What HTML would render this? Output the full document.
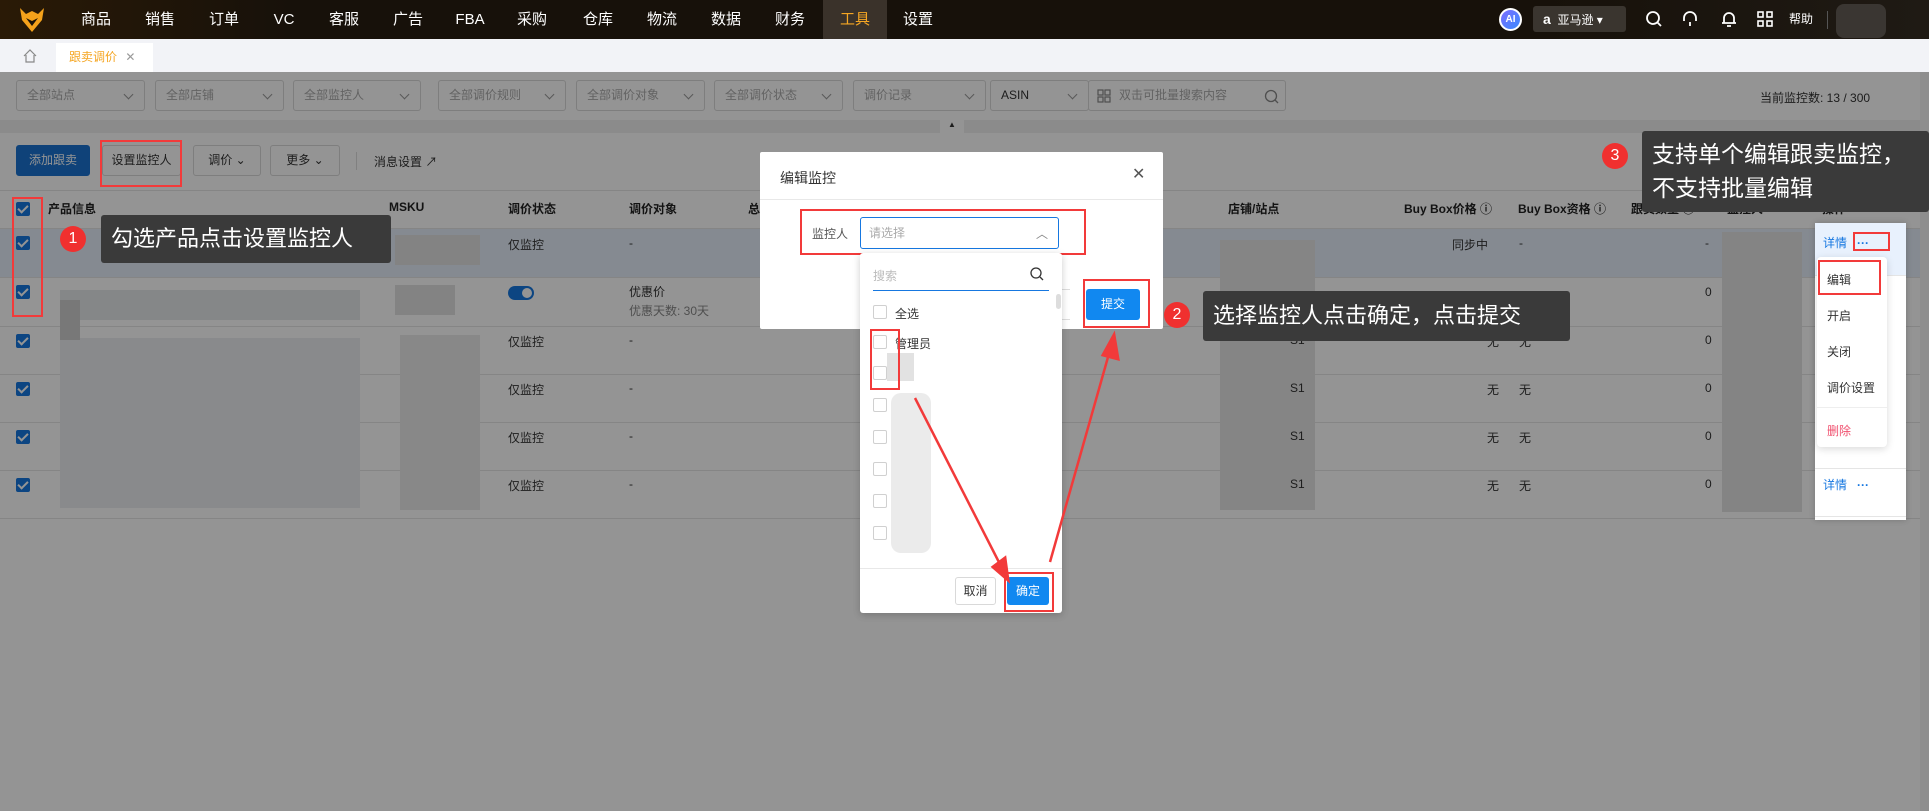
<!DOCTYPE html>
<html><head><meta charset="utf-8">
<style>
*{box-sizing:border-box;margin:0;padding:0}
body{width:1929px;height:811px;overflow:hidden;position:relative;background:#fff;font-family:"Liberation Sans","Noto Sans CJK SC",sans-serif;font-size:13px;color:#333}
.a{position:absolute}
.nav{left:0;top:0;width:1929px;height:39px;background:linear-gradient(90deg,#2a1a06 0%,#17110a 15%,#17110a 80%,#1f1a14 100%)}
.nav .m{position:absolute;top:0;height:39px;line-height:39px;color:#fff;font-size:15px;text-align:center;width:64px}
.sel{background:#fff;border:1px solid #d9d9d9;border-radius:3px;height:31px;line-height:29px;padding-left:10px;color:#aaa;font-size:12px}
.sel.c:after{content:"";position:absolute;right:12px;top:10px;width:6px;height:6px;border-right:1px solid #999;border-bottom:1px solid #999;transform:rotate(45deg)}
.btn{border:1px solid #d9d9d9;background:#fff;border-radius:3px;height:31px;line-height:29px;text-align:center;font-size:12px;color:#333}
.cb{width:14px;height:14px;background:#1677e0;border-radius:2px}
.cb:after{content:"";position:absolute;left:4px;top:1px;width:4px;height:8px;border-right:2px solid #fff;border-bottom:2px solid #fff;transform:rotate(45deg)}
.th{top:200px;font-weight:bold;font-size:12px;color:#222}
.td{font-size:12px;color:#333}
.rl{left:0;width:1920px;height:1px;background:#e5e5e5}
.red{border:2px solid #f23a3a}
.tip{background:#3a3a3a;color:#fff;border-radius:3px}
.num{width:26px;height:26px;border-radius:50%;background:#f0302f;color:#fff;text-align:center;line-height:26px;font-size:16px}
.ucb{width:14px;height:14px;border:1px solid #d0d0d0;border-radius:2px;background:#fff}
</style></head><body>

<div class="a nav">
 <svg class="a" style="left:18px;top:6px" width="28" height="28" viewBox="0 0 28 28"><path d="M2 2 L8 8 L14 5 L20 8 L26 2 L24 14 L14 26 L4 14 Z" fill="#f5a21b"/><path d="M8 12 L14 20 L20 12 L14 15 Z" fill="#1a1208"/></svg>
 <div class="m" style="left:64px">商品</div><div class="m" style="left:128px">销售</div><div class="m" style="left:192px">订单</div><div class="m" style="left:252px">VC</div><div class="m" style="left:312px">客服</div><div class="m" style="left:376px">广告</div><div class="m" style="left:438px">FBA</div><div class="m" style="left:500px">采购</div><div class="m" style="left:566px">仓库</div><div class="m" style="left:630px">物流</div><div class="m" style="left:694px">数据</div><div class="m" style="left:758px">财务</div>
 <div class="m" style="left:823px;background:#3a322a;color:#f5a623">工具</div><div class="m" style="left:886px">设置</div>
 <div class="a" style="left:1499px;top:8px;width:23px;height:23px;border-radius:50%;background:linear-gradient(135deg,#7b6cff,#3b8bff);border:2px solid #fff;color:#fff;font-size:10px;font-weight:bold;text-align:center;line-height:19px">AI</div>
 <div class="a" style="left:1533px;top:6px;width:93px;height:26px;background:#3a352f;border-radius:3px;color:#fff;font-size:12px;line-height:26px;padding-left:10px"><b style="font-size:14px">a</b>&nbsp; 亚马逊 ▾</div>
 <svg class="a" style="left:1645px;top:10px" width="18" height="18" viewBox="0 0 18 18" fill="none" stroke="#fff" stroke-width="1.8"><circle cx="8" cy="8" r="6"/><path d="M12.5 12.5 L16 16"/></svg>
 <svg class="a" style="left:1681px;top:10px" width="18" height="18" viewBox="0 0 18 18" fill="none" stroke="#fff" stroke-width="1.8"><path d="M3 11 V8 a6 6 0 0 1 12 0 V11 M9 16 V12"/></svg>
 <svg class="a" style="left:1720px;top:10px" width="18" height="18" viewBox="0 0 18 18" fill="none" stroke="#fff" stroke-width="1.8"><path d="M4 13 V8 a5 5 0 0 1 10 0 V13 Z M2 13 H16 M7 16 H11"/></svg>
 <svg class="a" style="left:1756px;top:10px" width="18" height="18" viewBox="0 0 18 18" fill="none" stroke="#fff" stroke-width="1.6"><rect x="2" y="2" width="5" height="5"/><rect x="11" y="2" width="5" height="5"/><rect x="2" y="11" width="5" height="5"/><rect x="11" y="11" width="5" height="5"/></svg>
 <div class="a" style="left:1789px;top:0;line-height:39px;color:#fff;font-size:12px">帮助</div>
 <div class="a" style="left:1827px;top:11px;width:1px;height:18px;background:#555"></div>
 <div class="a" style="left:1836px;top:4px;width:50px;height:34px;background:#3a3632;border-radius:8px"></div>
</div>

<div class="a" style="left:0;top:39px;width:1929px;height:33px;background:#f2f3f7"></div>
<svg class="a" style="left:23px;top:49px" width="14" height="14" viewBox="0 0 14 14" fill="none" stroke="#888" stroke-width="1.2"><path d="M1 7 L7 1 L13 7 M3 6 V13 H11 V6"/></svg>
<div class="a" style="left:56px;top:43px;width:97px;height:29px;background:#fff;color:#f5a623;font-size:12px;line-height:29px;padding-left:13px">跟卖调价 <span style="color:#999;margin-left:5px">✕</span></div>

<div class="a" style="left:0;top:72px;width:1920px;height:739px;background:#fff"></div>
<div class="a" style="left:1920px;top:72px;width:9px;height:739px;background:#f5f5f5"></div>
<div class="a sel c" style="left:16px;top:80px;width:129px">全部站点</div>
<div class="a sel c" style="left:155px;top:80px;width:129px">全部店铺</div>
<div class="a sel c" style="left:293px;top:80px;width:128px">全部监控人</div>
<div class="a sel c" style="left:438px;top:80px;width:128px">全部调价规则</div>
<div class="a sel c" style="left:576px;top:80px;width:129px">全部调价对象</div>
<div class="a sel c" style="left:714px;top:80px;width:129px">全部调价状态</div>
<div class="a sel c" style="left:853px;top:80px;width:133px">调价记录</div>
<div class="a sel c" style="left:990px;top:80px;width:99px;color:#333">ASIN</div>
<div class="a sel" style="left:1088px;top:80px;width:198px;padding-left:30px">双击可批量搜索内容</div>
<svg class="a" style="left:1097px;top:89px" width="14" height="14" viewBox="0 0 14 14" fill="none" stroke="#888" stroke-width="1.2"><rect x="1" y="1" width="5" height="5"/><rect x="8" y="1" width="5" height="5"/><rect x="1" y="8" width="5" height="5"/><rect x="8" y="8" width="5" height="5"/></svg>
<svg class="a" style="left:1264px;top:89px" width="15" height="15" viewBox="0 0 15 15" fill="none" stroke="#888" stroke-width="1.3"><circle cx="7" cy="7" r="5.5"/><path d="M11 11 L14 14"/></svg>
<div class="a" style="left:1760px;top:89px;font-size:12px;color:#333">当前监控数: 13 / 300</div>
<div class="a" style="left:0;top:120px;width:1920px;height:13px;background:#f0f0f0"></div>
<div class="a" style="left:940px;top:120px;width:24px;height:13px;background:#fff;color:#333;font-size:8px;text-align:center">▲</div>

<div class="a btn" style="left:16px;top:145px;width:74px;background:#1a73d1;color:#fff;border-color:#1a73d1">添加跟卖</div>
<div class="a btn" style="left:102px;top:145px;width:79px">设置监控人</div>
<div class="a btn" style="left:193px;top:145px;width:68px">调价 ⌄</div>
<div class="a btn" style="left:270px;top:145px;width:70px">更多 ⌄</div>
<div class="a" style="left:356px;top:152px;width:1px;height:18px;background:#ddd"></div>
<div class="a" style="left:374px;top:153px;font-size:12px">消息设置 ↗</div>

<div class="a rl" style="top:190px"></div>
<div class="a" style="left:0;top:228px;width:1920px;height:49px;background:#e6eefa"></div>
<div class="a rl" style="top:228px"></div><div class="a rl" style="top:277px"></div><div class="a rl" style="top:326px"></div><div class="a rl" style="top:374px"></div><div class="a rl" style="top:422px"></div><div class="a rl" style="top:470px"></div><div class="a rl" style="top:518px"></div>
<div class="a cb" style="left:16px;top:202px"></div>
<div class="a th" style="left:48px">产品信息</div><div class="a th" style="left:389px">MSKU</div><div class="a th" style="left:508px">调价状态</div><div class="a th" style="left:629px">调价对象</div><div class="a th" style="left:748px">总</div>
<div class="a th" style="left:1228px">店铺/站点</div><div class="a th" style="left:1404px">Buy Box价格 ⓘ</div><div class="a th" style="left:1518px">Buy Box资格 ⓘ</div><div class="a th" style="left:1631px">跟卖数量 ⓘ</div><div class="a th" style="left:1727px">监控人</div><div class="a th" style="left:1822px">操作</div>

<div class="a cb" style="left:16px;top:236px"></div><div class="a cb" style="left:16px;top:285px"></div><div class="a cb" style="left:16px;top:334px"></div><div class="a cb" style="left:16px;top:382px"></div><div class="a cb" style="left:16px;top:430px"></div><div class="a cb" style="left:16px;top:478px"></div>
<div class="a" style="left:60px;top:290px;width:300px;height:30px;background:#e6e8eb"></div>
<div class="a" style="left:60px;top:338px;width:300px;height:170px;background:#eceef1"></div>
<div class="a" style="left:60px;top:300px;width:20px;height:40px;background:#cfcfcf"></div>
<div class="a" style="left:395px;top:235px;width:85px;height:30px;background:#e2e2e2"></div>
<div class="a" style="left:395px;top:285px;width:60px;height:30px;background:#e2e2e2"></div>
<div class="a" style="left:400px;top:335px;width:80px;height:175px;background:#ebebeb"></div>
<div class="a td" style="left:508px;top:236px">仅监控</div>
<div class="a" style="left:508px;top:286px;width:26px;height:14px;border-radius:7px;background:#1677e0"><div class="a" style="right:2px;top:2px;width:10px;height:10px;border-radius:50%;background:#fff"></div></div>
<div class="a td" style="left:508px;top:333px">仅监控</div><div class="a td" style="left:508px;top:381px">仅监控</div><div class="a td" style="left:508px;top:429px">仅监控</div><div class="a td" style="left:508px;top:477px">仅监控</div>
<div class="a td" style="left:629px;top:236px">-</div>
<div class="a td" style="left:629px;top:283px">优惠价</div><div class="a td" style="left:629px;top:302px;color:#888">优惠天数: 30天</div>
<div class="a td" style="left:629px;top:333px">-</div><div class="a td" style="left:629px;top:381px">-</div><div class="a td" style="left:629px;top:429px">-</div><div class="a td" style="left:629px;top:477px">-</div>
<div class="a" style="left:1220px;top:240px;width:95px;height:270px;background:#e6e6e6"></div>
<div class="a td" style="left:1290px;top:333px">S1</div><div class="a td" style="left:1290px;top:381px">S1</div><div class="a td" style="left:1290px;top:429px">S1</div><div class="a td" style="left:1290px;top:477px">S1</div>
<div class="a td" style="left:1452px;top:236px">同步中</div><div class="a td" style="left:1519px;top:236px">-</div>
<div class="a td" style="left:1487px;top:333px">无</div><div class="a td" style="left:1519px;top:333px">无</div>
<div class="a td" style="left:1487px;top:381px">无</div><div class="a td" style="left:1519px;top:381px">无</div>
<div class="a td" style="left:1487px;top:429px">无</div><div class="a td" style="left:1519px;top:429px">无</div>
<div class="a td" style="left:1487px;top:477px">无</div><div class="a td" style="left:1519px;top:477px">无</div>
<div class="a" style="left:1722px;top:232px;width:80px;height:280px;background:#e4e4e4"></div>
<div class="a td" style="left:1705px;top:236px">-</div><div class="a td" style="left:1705px;top:285px">0</div><div class="a td" style="left:1705px;top:333px">0</div><div class="a td" style="left:1705px;top:381px">0</div><div class="a td" style="left:1705px;top:429px">0</div><div class="a td" style="left:1705px;top:477px">0</div>

<div class="a" style="left:0;top:72px;width:1929px;height:739px;background:rgba(0,0,0,0.42)"></div>

<div class="a" style="left:1815px;top:223px;width:91px;height:297px;background:#fff;box-shadow:0 0 6px rgba(0,0,0,.2)">
 <div class="a" style="left:0;top:0;width:91px;height:52px;background:#e8f1fd"></div>
 <div class="a" style="left:0;top:52px;width:91px;height:1px;background:#e5e5e5"></div>
 <div class="a" style="left:0;top:245px;width:91px;height:1px;background:#e5e5e5"></div>
 <div class="a" style="left:0;top:293px;width:91px;height:1px;background:#e5e5e5"></div>
 <div class="a" style="left:8px;top:11px;color:#1677e0;font-size:12px">详情 &nbsp; <b>···</b></div>
 <div class="a" style="left:8px;top:253px;color:#1677e0;font-size:12px">详情 &nbsp; <b>···</b></div>
</div>
<div class="a" style="left:1817px;top:257px;width:70px;height:190px;background:#fff;border-radius:4px;box-shadow:0 2px 8px rgba(0,0,0,.15);font-size:12px;color:#333">
 <div class="a" style="left:10px;top:14px">编辑</div><div class="a" style="left:10px;top:50px">开启</div><div class="a" style="left:10px;top:86px">关闭</div><div class="a" style="left:10px;top:122px">调价设置</div>
 <div class="a" style="left:0;top:150px;width:70px;height:1px;background:#eee"></div>
 <div class="a" style="left:10px;top:165px;color:#f0506e">删除</div>
</div>
<div class="a red" style="left:1853px;top:232px;width:37px;height:19px"></div>
<div class="a red" style="left:1818px;top:260px;width:63px;height:35px"></div>

<div class="a" style="left:760px;top:152px;width:403px;height:177px;background:#fff;border-radius:2px">
 <div class="a" style="left:20px;top:16px;font-size:14px;color:#333">编辑监控</div>
 <div class="a" style="left:372px;top:12px;font-size:16px;color:#555">✕</div>
 <div class="a" style="left:0;top:47px;width:403px;height:1px;background:#e8e8e8"></div>
 <div class="a" style="left:52px;top:73px;font-size:12px;color:#555">监控人</div>
 <div class="a" style="left:100px;top:65px;width:199px;height:32px;border:1px solid #1677e0;border-radius:3px;font-size:12px;color:#aaa;line-height:30px;padding-left:8px">请选择<span class="a" style="right:10px;top:1px;color:#888">︿</span></div>
 <div class="a" style="left:296px;top:137px;width:14px;height:31px;border:1px solid #ddd;border-right:none;border-radius:3px 0 0 3px"></div>
 <div class="a" style="left:326px;top:137px;width:54px;height:31px;background:#1188f0;color:#fff;border-radius:3px;font-size:12px;text-align:center;line-height:31px">提交</div>
</div>
<div class="a red" style="left:800px;top:209px;width:286px;height:46px"></div>
<div class="a red" style="left:1083px;top:279px;width:67px;height:49px"></div>

<div class="a" style="left:860px;top:253px;width:202px;height:360px;background:#fff;border-radius:3px;box-shadow:0 2px 8px rgba(0,0,0,.2);font-size:12px;color:#333">
 <div class="a" style="left:13px;top:14px;color:#bbb">搜索</div>
 <svg class="a" style="left:170px;top:14px" width="14" height="14" viewBox="0 0 14 14" fill="none" stroke="#333" stroke-width="1.3"><circle cx="6" cy="6" r="5"/><path d="M10 10 L13 13"/></svg>
 <div class="a" style="left:13px;top:37px;width:176px;height:1px;background:#1677e0"></div>
 <div class="a" style="left:196px;top:41px;width:5px;height:15px;background:#ddd;border-radius:3px"></div>
 <div class="a ucb" style="left:13px;top:52px"></div><div class="a" style="left:35px;top:52px">全选</div>
 <div class="a ucb" style="left:13px;top:82px"></div><div class="a" style="left:35px;top:82px">管理员</div>
 <div class="a ucb" style="left:13px;top:113px"></div><div class="a" style="left:27px;top:100px;width:27px;height:28px;background:#e2e2e2"></div>
 <div class="a ucb" style="left:13px;top:145px"></div><div class="a ucb" style="left:13px;top:177px"></div><div class="a ucb" style="left:13px;top:209px"></div><div class="a ucb" style="left:13px;top:241px"></div><div class="a ucb" style="left:13px;top:273px"></div>
 <div class="a" style="left:31px;top:140px;width:40px;height:160px;background:#ebebeb;border-radius:10px"></div>
 <div class="a" style="left:0;top:315px;width:202px;height:1px;background:#e8e8e8"></div>
 <div class="a" style="left:95px;top:324px;width:41px;height:28px;border:1px solid #d9d9d9;border-radius:3px;text-align:center;line-height:26px">取消</div>
 <div class="a" style="left:147px;top:324px;width:42px;height:28px;background:#1188f0;color:#fff;border-radius:3px;text-align:center;line-height:28px">确定</div>
</div>
<div class="a red" style="left:870px;top:329px;width:30px;height:61px"></div>
<div class="a red" style="left:1004px;top:572px;width:50px;height:40px"></div>

<svg class="a" style="left:0;top:0" width="1929" height="811" viewBox="0 0 1929 811">
 <path d="M915 398 L1005 574" stroke="#f23a3a" stroke-width="2.5" fill="none"/>
 <path d="M993 567 L1008 580 L1005 558 Z" fill="#f23a3a" stroke="#f23a3a" stroke-width="3"/>
 <path d="M1050 562 L1112 343" stroke="#f23a3a" stroke-width="2.5" fill="none"/>
 <path d="M1103 355 L1114 335 L1118 359 Z" fill="#f23a3a" stroke="#f23a3a" stroke-width="3"/>
</svg>

<div class="a red" style="left:100px;top:140px;width:82px;height:47px"></div>
<div class="a red" style="left:12px;top:197px;width:31px;height:120px"></div>

<div class="a num" style="left:60px;top:226px">1</div>
<div class="a" style="left:94px;top:233px;border:7px solid transparent;border-right-color:#3a3a3a;width:0;height:0"></div>
<div class="a tip" style="left:101px;top:215px;width:290px;height:48px;font-size:22px;line-height:48px;padding-left:10px">勾选产品点击设置监控人</div>

<div class="a num" style="left:1164px;top:302px">2</div>
<div class="a" style="left:1196px;top:309px;border:7px solid transparent;border-right-color:#3a3a3a;width:0;height:0"></div>
<div class="a tip" style="left:1203px;top:291px;width:367px;height:50px;font-size:22px;line-height:50px;padding-left:10px">选择监控人点击确定，点击提交</div>

<div class="a num" style="left:1602px;top:143px">3</div>
<div class="a" style="left:1635px;top:149px;border:7px solid transparent;border-right-color:#3a3a3a;width:0;height:0"></div>
<div class="a tip" style="left:1642px;top:131px;width:287px;height:81px;font-size:23px;line-height:34px;padding:6px 0 0 10px">支持单个编辑跟卖监控，<br>不支持批量编辑</div>

</body></html>
